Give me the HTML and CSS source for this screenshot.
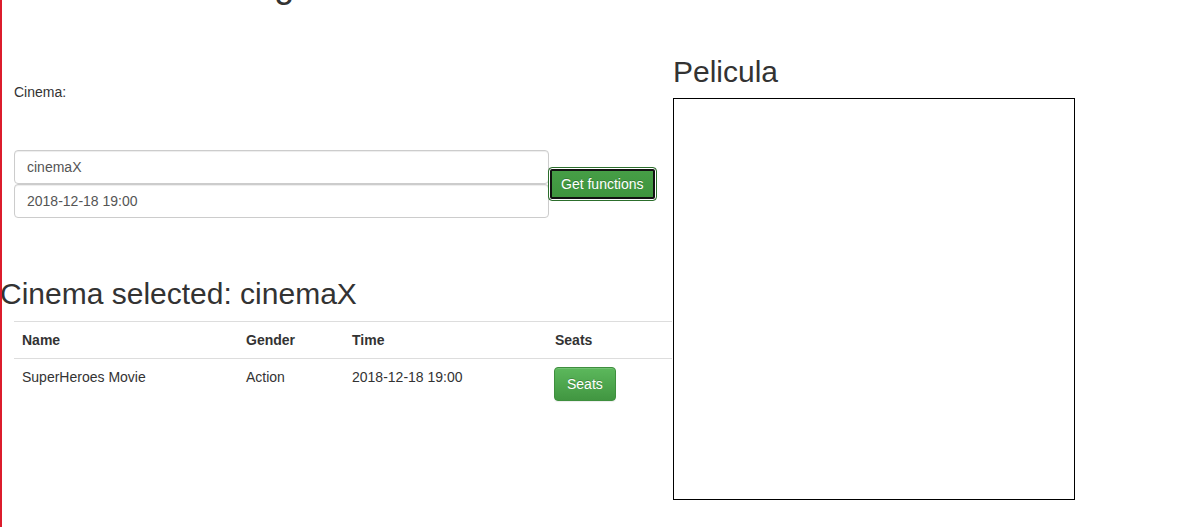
FILE: index.html
```html
<!DOCTYPE html>
<html lang="en">
<head>
<meta charset="utf-8">
<title>Cinema Booking</title>
<link rel="stylesheet" href="styles.css">
</head>
<body>
<div class="page">
  <div class="left">
    <h1 class="title">Cinema Booking</h1>
    <div class="form">
      <label class="label">Cinema:</label>
      <div class="form-row">
        <div class="inputs">
          <input class="form-control first" type="text" value="cinemaX">
          <input class="form-control" type="text" value="2018-12-18 19:00">
        </div>
        <button class="btn btn-focus" type="button">Get functions</button>
      </div>
    </div>
    <h2 class="selected">Cinema selected: cinemaX</h2>
    <table class="table">
      <thead>
        <tr>
          <th class="c-name">Name</th>
          <th class="c-gender">Gender</th>
          <th class="c-time">Time</th>
          <th class="c-seats">Seats</th>
        </tr>
      </thead>
      <tbody>
        <tr>
          <td>SuperHeroes Movie</td>
          <td>Action</td>
          <td>2018-12-18 19:00</td>
          <td><button class="btn btn-success" type="button">Seats</button></td>
        </tr>
      </tbody>
    </table>
  </div>
  <div class="right">
    <h2 class="movie-title">Pelicula</h2>
    <div class="canvas"></div>
  </div>
</div>
</body>
</html>
```

FILE: styles.css
```css
html, body {
  margin: 0;
  padding: 0;
  background: #fff;
  overflow: hidden;
}

body {
  font-family: "Liberation Sans", Arial, Helvetica, sans-serif;
  font-size: 14px;
  line-height: 20px;
  color: #333;
}

body::before {
  content: "";
  position: fixed;
  left: 0;
  top: 0;
  bottom: 0;
  width: 2px;
  background: #dc1c2c;
  z-index: 5;
}

.page {
  display: flex;
  align-items: flex-start;
}

.left {
  width: 673px;
  flex: none;
}

.title {
  margin: -35px 0 0 0;
  padding-left: 30px;
  font-size: 36px;
  line-height: 40px;
  font-weight: 500;
}

.form {
  margin-top: 77px;
  padding-left: 14px;
}

.label {
  display: block;
  height: 20px;
}

.form-row {
  margin-top: 48px;
  display: flex;
  align-items: center;
}

.inputs {
  width: 535px;
  display: flex;
  flex-direction: column;
}

.form-control {
  box-sizing: border-box;
  height: 34px;
  width: 100%;
  margin: 0;
  padding: 6px 12px;
  font-family: inherit;
  font-size: 14px;
  line-height: 20px;
  color: #555;
  background: #fff;
  border: 1px solid #ccc;
  border-radius: 4px;
  box-shadow: inset 0 1px 1px rgba(0, 0, 0, 0.075);
}

.btn {
  box-sizing: border-box;
  height: 34px;
  margin: 0;
  padding: 6px 12px;
  font-family: inherit;
  font-size: 14px;
  line-height: 20px;
  color: #fff;
  border-radius: 4px;
  cursor: pointer;
  text-shadow: 0 -1px 0 rgba(0, 0, 0, 0.2);
  white-space: nowrap;
}

.btn-focus {
  margin-left: -1px;
  background: linear-gradient(#479f47, #3d933d);
  border: 1px solid #2c6e2c;
  box-shadow: inset 0 0 0 1px #fff, inset 0 0 0 3px #111;
}

.btn-success {
  margin-left: -1px;
  background: linear-gradient(#5cb85c, #419641);
  border: 1px solid #3e8f3e;
  box-shadow: inset 0 1px 0 rgba(255, 255, 255, 0.15), 0 1px 1px rgba(0, 0, 0, 0.075);
}

.selected {
  margin: 59px 0 11px 0;
  font-size: 30px;
  line-height: 33px;
  font-weight: 500;
  height: 33px;
}

.table {
  margin-left: 14px;
  width: 658px;
  border-collapse: collapse;
  border-spacing: 0;
}

.table th,
.table td {
  padding: 8px;
  text-align: left;
  vertical-align: top;
  line-height: 20px;
}

.table th {
  font-weight: bold;
  border-top: 1px solid #ddd;
  border-bottom: 1px solid #ddd;
}

.c-name { width: 208px; }
.c-gender { width: 90px; }
.c-time { width: 187px; }

.right {
  flex: none;
}

.movie-title {
  margin: 55px 0 10px 0;
  font-size: 30px;
  line-height: 33px;
  font-weight: 500;
}

.canvas {
  width: 400px;
  height: 400px;
  border: 1px solid #000;
}
```
